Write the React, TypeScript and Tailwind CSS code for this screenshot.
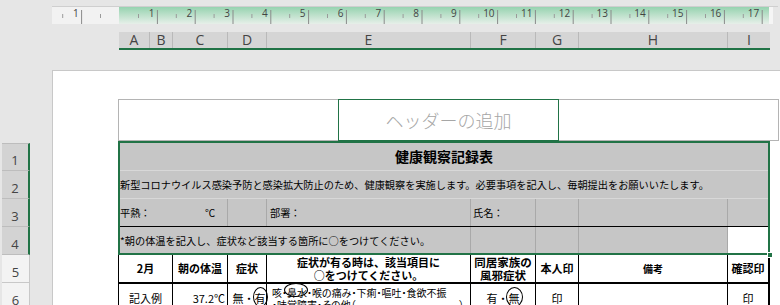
import React from "react";

const JP = "font-['Noto_Sans_CJK_JP',sans-serif]";
const UI = "font-['Open_Sans','Liberation_Sans',sans-serif]";

const colHeads: [string, number][] = [
  ["A", 31],
  ["B", 23],
  ["C", 55],
  ["D", 39],
  ["E", 204],
  ["F", 65],
  ["G", 43],
  ["H", 149],
  ["I", 42],
];

// ruler tick positions, relative to the ruler's left edge (x = 52)
const majors = [81.6, ...Array.from({ length: 17 }, (_, i) => 157.4 + 37.8 * i)].map((x) => x - 52);
const minors = [62.7, 100.5, ...Array.from({ length: 17 }, (_, i) => 138.5 + 37.8 * i)].map((x) => x - 52);

const Ruler = () => (
  <div className="relative ml-[52px] flex h-[18px] w-[726px] border-t border-[#cfcfcf] text-[10px] leading-[12px] text-[#444]">
    <div className="flex w-[67px] bg-[#f2f2f2]">
      <div className="w-[29.6px] pr-[3px] text-right">1</div>
    </div>
    <div className="flex w-[650px] bg-gradient-to-b from-[#96d3b0] to-[#e6efe9]">
      <div className="w-[38.4px] shrink-0 pr-[3px] text-right">1</div>
      {Array.from({ length: 16 }, (_, i) => (
        <div key={i} className="w-[37.8px] shrink-0 pr-[3px] text-right">
          {i + 2}
        </div>
      ))}
    </div>
    <div className="w-[4px] bg-[#f5f5f5]" />
    <svg className="pointer-events-none absolute inset-0" width="726" height="17">
      {majors.map((x, i) => (
        <line key={"M" + i} x1={x} x2={x} y1={3} y2={17} stroke="#8a8a8a" strokeWidth={1} />
      ))}
      {minors.map((x, i) => (
        <line key={"m" + i} x1={x} x2={x} y1={7} y2={11} stroke="#9a9a9a" strokeWidth={1} />
      ))}
    </svg>
  </div>
);

const ColumnHeaders = () => (
  <div className="ml-[119px] w-[651px]">
    <div className="flex h-[16px] bg-[#d5d5d5] text-[14px] leading-[16px] text-[#444]">
      {colHeads.map(([l, w], i) => (
        <div
          key={l}
          style={{ width: w }}
          className={`shrink-0 text-center ${i < colHeads.length - 1 ? "border-r border-[#b9b9b9]" : ""}`}
        >
          {l}
        </div>
      ))}
    </div>
    <div className="h-[2px] bg-[#217346]" />
  </div>
);

const RowHeaders = () => (
  <div className="ml-[2px] mt-[93px] w-[28px] text-[13px] leading-none text-[#444]">
    {[1, 2, 3, 4].map((n) => (
      <div
        key={n}
        className={`flex h-[28px] items-end justify-center border-r-2 border-r-[#217346] bg-[#d3d3d3] pb-[3px] ${
          n === 1 ? "border-t border-t-[#bdbdbd]" : ""
        } border-b border-b-[#bdbdbd]`}
      >
        {n}
      </div>
    ))}
    {[5, 6].map((n) => (
      <div
        key={n}
        className="flex h-[28px] items-end justify-center border-r border-b border-[#c8c8c8] bg-[#f3f3f3] pb-[3px]"
      >
        {n}
      </div>
    ))}
  </div>
);

const Circled = ({ children, className }: { children: React.ReactNode; className: string }) => (
  <span className="relative">
    {children}
    <span className={`absolute rounded-[50%] border border-black ${className}`} />
  </span>
);

const gl = "border-r border-[#a9a9a9]";
const bl = "border-r border-black";

const SelectedBlock = () => (
  <div className="relative w-[652px] bg-[#c6c6c6] text-black">
    <div className="h-[2px]" />
    <div className="flex h-[28px] items-center justify-center border-b border-[#d8d8d8] text-[14px] font-bold">
      健康観察記録表
    </div>
    <div className="flex h-[28px] items-center border-b border-[#d8d8d8] pl-[2px] text-[10.2px]">
      新型コロナウイルス感染予防と感染拡大防止のため、健康観察を実施します。必要事項を記入し、毎朝提出をお願いいたします。
    </div>
    <div className="flex h-[28px] border-b border-black text-[10.2px]">
      <div className={`flex w-[110px] items-center pl-[2px] ${gl}`}>
        <span className="w-[85px]">平熱：</span>
        <span>℃</span>
      </div>
      <div className={`w-[39px] ${gl}`} />
      <div className={`flex w-[204px] items-center pl-[3px] ${gl}`}>部署：</div>
      <div className={`flex w-[65px] items-center pl-[2px] ${gl}`}>氏名：</div>
      <div className={`w-[43px] ${gl}`} />
      <div className={`w-[149px] ${gl}`} />
      <div className="w-[42px]" />
    </div>
    <div className="flex h-[28px] text-[10.2px]">
      <div className={`flex w-[353px] items-center pl-[2px] ${gl}`}>
        *朝の体温を記入し、症状など該当する箇所に○をつけてください。
      </div>
      <div className={`w-[65px] ${gl}`} />
      <div className={`w-[43px] ${gl}`} />
      <div className={`w-[149px] ${gl}`} />
      <div className="w-[40px] bg-white" />
    </div>
    <div className="pointer-events-none absolute inset-0 border-2 border-[#217346]" />
    <div className="absolute right-[-3px] bottom-[-3px] h-[6px] w-[6px] border border-white bg-[#217346]" />
  </div>
);

const TableRows = () => (
  <div className="w-[652px] text-black">
    <div className="flex h-[29px] border-b-2 border-black text-[11px] font-bold leading-[13px]">
      <div className={`flex w-[55px] items-center justify-center border-l border-black ${bl}`}>2月</div>
      <div className={`flex w-[55px] items-center justify-center ${bl}`}>朝の体温</div>
      <div className={`flex w-[39px] items-center justify-center ${bl}`}>症状</div>
      <div className={`flex w-[204px] flex-col items-center justify-center ${bl}`}>
        <span>症状が有る時は、該当項目に</span>
        <span>○をつけてください。</span>
      </div>
      <div className={`flex w-[65px] flex-col items-center justify-center text-[11.5px] ${bl}`}>
        <span>同居家族の</span>
        <span>風邪症状</span>
      </div>
      <div className={`flex w-[43px] items-center justify-center ${bl}`}>本人印</div>
      <div className={`flex w-[149px] items-center justify-center text-[10px] ${bl}`}>備考</div>
      <div className="flex w-[42px] items-center justify-center border-r-2 border-black">確認印</div>
    </div>
    <div className="flex h-[28px] text-[11px]">
      <div className={`flex w-[55px] items-center justify-center border-l border-black ${bl}`}>記入例</div>
      <div className={`flex w-[55px] items-center justify-end pr-[2px] ${bl}`}>37.2℃</div>
      <div className={`flex w-[39px] items-center justify-center pl-[4px] ${bl}`}>
        無・
        <Circled className="left-[-2px] top-[-3px] h-[20px] w-[15px]">有</Circled>
      </div>
      <div className={`w-[204px] overflow-hidden pt-[3px] pl-[5px] pr-[6px] text-[10px] leading-[12px] [font-feature-settings:'palt'] ${bl}`}>
        <div className="whitespace-nowrap">
          咳・<Circled className="left-[-3px] top-[-2px] h-[14px] w-[24px]">鼻水</Circled>・喉の痛み・下痢・嘔吐・食欲不振
        </div>
        <div className="flex justify-between whitespace-nowrap">
          <span>・味覚障害・その他（</span>
          <span>）</span>
        </div>
      </div>
      <div className={`flex w-[65px] items-center justify-center ${bl}`}>
        有・<Circled className="left-[-3px] top-[-3px] h-[20px] w-[17px]">無</Circled>
      </div>
      <div className={`flex w-[43px] items-center justify-center ${bl}`}>印</div>
      <div className={`w-[149px] ${bl}`} />
      <div className="flex w-[42px] items-center justify-center border-r-2 border-black">印</div>
    </div>
  </div>
);

const Page = () => (
  <div className="mt-[20px] flex-1 border-t border-l border-[#c8c8c8] bg-white pt-[28px] pl-[65px]">
    <div className="flex h-[42px]">
      <div className="w-[220px] border-y border-l border-[#b4b4b4]" />
      <div className="flex w-[221px] items-center justify-center border border-[#217346] text-[18px] font-light text-[#a6a6a6]">
        ヘッダーの追加
      </div>
      <div className="w-[220px] border-y border-r border-[#b4b4b4]" />
    </div>
    <SelectedBlock />
    <TableRows />
  </div>
);

export default function App() {
  return (
    <div className={`flex h-[305px] w-[780px] flex-col overflow-hidden bg-[#e6e6e6] ${JP}`}>
      <div className="h-[6px] shrink-0" />
      <div className={UI}>
        <Ruler />
      </div>
      <div className="h-[8px] shrink-0" />
      <div className={UI}>
        <ColumnHeaders />
      </div>
      <div className="flex flex-1">
        <div className={`w-[52px] shrink-0 ${UI}`}>
          <RowHeaders />
        </div>
        <Page />
      </div>
    </div>
  );
}
